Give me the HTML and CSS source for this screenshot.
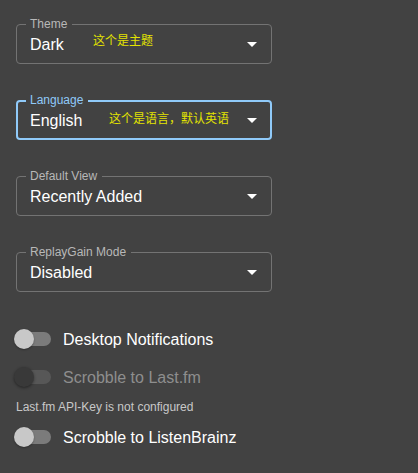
FILE: index.html
```html
<!DOCTYPE html>
<html lang="en">
<head>
<meta charset="utf-8">
<link rel="stylesheet" href="styles.css">
</head>
<body>
<div class="settings">
  <div class="field">
    <span class="label">Theme</span>
    <span class="value">Dark</span>
    <svg class="arrow" viewBox="0 0 24 24" width="24" height="24"><path d="M7 10l5 5 5-5z" fill="#fff"/></svg>
    <span class="note note-theme">这个是主题</span>
  </div>
  <div class="field focused">
    <span class="label">Language</span>
    <span class="value">English</span>
    <svg class="arrow" viewBox="0 0 24 24" width="24" height="24"><path d="M7 10l5 5 5-5z" fill="#fff"/></svg>
    <span class="note note-lang">这个是语言，默认英语</span>
  </div>
  <div class="field">
    <span class="label">Default View</span>
    <span class="value">Recently Added</span>
    <svg class="arrow" viewBox="0 0 24 24" width="24" height="24"><path d="M7 10l5 5 5-5z" fill="#fff"/></svg>
  </div>
  <div class="field">
    <span class="label">ReplayGain Mode</span>
    <span class="value">Disabled</span>
    <svg class="arrow" viewBox="0 0 24 24" width="24" height="24"><path d="M7 10l5 5 5-5z" fill="#fff"/></svg>
  </div>

  <div class="toggles">
    <label class="toggle">
      <span class="switch"><span class="track"></span><span class="thumb"></span></span>
      <span class="toggle-text">Desktop Notifications</span>
    </label>
    <label class="toggle disabled">
      <span class="switch"><span class="track"></span><span class="thumb"></span></span>
      <span class="toggle-text">Scrobble to Last.fm</span>
    </label>
    <div class="helper">Last.fm API-Key is not configured</div>
    <label class="toggle">
      <span class="switch"><span class="track"></span><span class="thumb"></span></span>
      <span class="toggle-text">Scrobble to ListenBrainz</span>
    </label>
  </div>
</div>
</body>
</html>
```

FILE: styles.css
```css
html, body {
  margin: 0;
  padding: 0;
  background: #424242;
  font-family: "Liberation Sans", Arial, "Noto Sans CJK SC", sans-serif;
  color: #fff;
}

.settings {
  padding: 24px 0 0 16px;
  display: flex;
  flex-direction: column;
}

.field {
  position: relative;
  box-sizing: border-box;
  width: 256px;
  height: 40px;
  border: 1px solid #737373;
  border-radius: 4px;
  display: flex;
  align-items: center;
  padding-left: 13px;
  margin-bottom: 36px;
}

.field.focused {
  border: 2px solid #90caf9;
  padding-left: 12px;
}

.label {
  position: absolute;
  left: 9px;
  top: -8px;
  padding: 0 5px 0 4px;
  background: #424242;
  font-size: 12px;
  line-height: 14px;
  color: #b8b8b8;
}

.focused .label {
  left: 8px;
  top: -9px;
  color: #90caf9;
}

.value {
  font-size: 16px;
  line-height: 19px;
  color: #fff;
}

.arrow {
  position: absolute;
  right: 7px;
  top: 7px;
}

.focused .arrow {
  right: 6px;
  top: 6px;
}

.note {
  position: absolute;
  font-family: "Noto Sans CJK SC", sans-serif;
  font-size: 12px;
  line-height: 14px;
  color: #e3e300;
}

.note-theme {
  left: 76px;
  top: 8px;
}

.note-lang {
  left: 91px;
  top: 9px;
}

.toggles {
  display: flex;
  flex-direction: column;
  margin-top: -8px;
}

.toggle {
  display: flex;
  align-items: center;
  height: 38px;
  margin-left: -11px;
}

.switch {
  position: relative;
  width: 58px;
  height: 38px;
  box-sizing: border-box;
  padding: 12px;
  flex: none;
}

.track {
  display: block;
  width: 34px;
  height: 14px;
  border-radius: 7px;
  background: #7b7b7b;
}

.thumb {
  position: absolute;
  left: 9px;
  top: 9px;
  width: 20px;
  height: 20px;
  border-radius: 50%;
  background: #c8c8c8;
  box-shadow: 0 1px 2px rgba(0,0,0,0.3);
}

.toggle-text {
  font-size: 16px;
  line-height: 19px;
  color: #fff;
}

.disabled .track {
  background: #575757;
}

.disabled .thumb {
  background: #393939;
  box-shadow: 0 1px 3px rgba(0,0,0,0.45);
}

.disabled .toggle-text {
  color: #8e8e8e;
}

.helper {
  font-size: 12px;
  line-height: 14px;
  color: #c8c8c8;
  margin: 4px 0 4px 0;
}
```
